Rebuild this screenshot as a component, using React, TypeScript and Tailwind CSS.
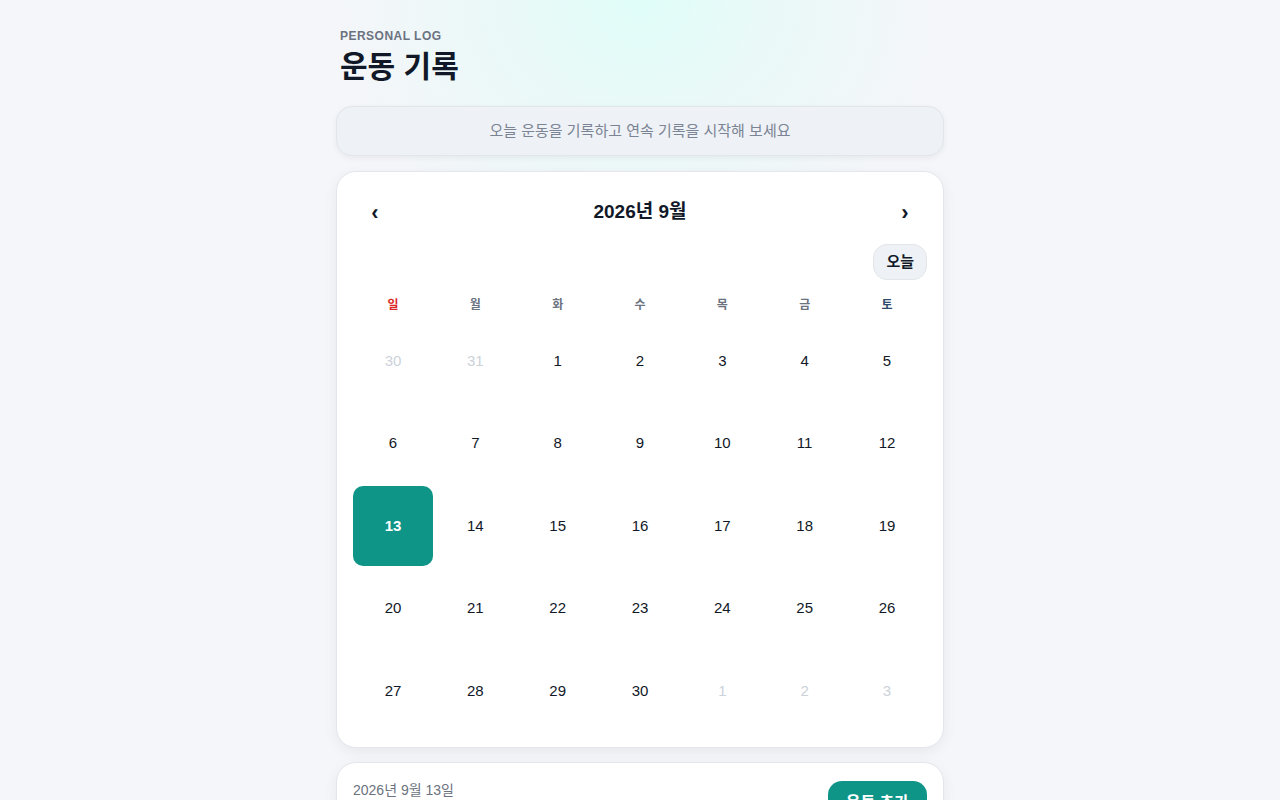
const WEEKDAYS = ["일", "월", "화", "수", "목", "금", "토"];

type Day = { n: number; inMonth: boolean };

function buildDays(): Day[] {
  const days: Day[] = [{ n: 30, inMonth: false }, { n: 31, inMonth: false }];
  for (let i = 1; i <= 30; i++) days.push({ n: i, inMonth: true });
  for (let i = 1; i <= 3; i++) days.push({ n: i, inMonth: false });
  return days;
}

function weekdayColor(i: number) {
  if (i === 0) return "text-[#dc2626]";
  if (i === 6) return "text-[#2f4a6b]";
  return "text-[#6b7280]";
}

export default function App() {
  const days = buildDays();
  const selected = 13;

  return (
    <div
      className="min-h-screen bg-[#f4f6f9] bg-[radial-gradient(ellipse_300px_260px_at_50%_0%,#e0fdf8_0%,#eaf9f8_45%,transparent_100%)] text-[#111827]"
      style={{ fontFamily: '"Liberation Sans", "Noto Sans CJK KR", Arial, sans-serif' }}
    >
      <div className="mx-auto w-[608px] pt-[27px] pb-10">
        <header className="px-1">
          <p className="text-[12px] font-bold uppercase tracking-[0.04em] text-[#6b7280]">
            Personal Log
          </p>
          <h1 className="mt-[3px] text-[30px] font-bold leading-[38px] text-[#111827]">
            운동 기록
          </h1>
        </header>

        <div className="mt-5 flex h-[50px] items-center justify-center rounded-[16px] border border-[#e2e6eb] bg-[#eef1f5] text-[15px] text-[#7b8494] shadow-[0_2px_6px_rgba(15,23,42,0.06)]">
          오늘 운동을 기록하고 연속 기록을 시작해 보세요
        </div>

        <section className="mt-[15px] rounded-[20px] border border-[#e3e7ec] bg-white p-4 shadow-[0_4px_14px_rgba(15,23,42,0.06)]">
          <div className="flex h-12 items-center justify-between">
            <button className="flex h-11 w-11 items-center justify-center text-[22px] font-bold text-[#111827]">
              ‹
            </button>
            <h2 className="text-[19px] font-bold text-[#111827]">2026년 9월</h2>
            <button className="flex h-11 w-11 items-center justify-center text-[22px] font-bold text-[#111827]">
              ›
            </button>
          </div>

          <div className="mt-2 flex justify-end">
            <button className="h-9 rounded-[14px] border border-[#e2e6eb] bg-[#eef1f5] px-3 text-[15px] font-bold text-[#111827]">
              오늘
            </button>
          </div>

          <div className="mt-[17px] grid grid-cols-7 gap-[2.3px]">
            {WEEKDAYS.map((w, i) => (
              <div
                key={w}
                className={`flex h-4 items-center justify-center text-[12px] font-bold ${weekdayColor(i)}`}
              >
                {w}
              </div>
            ))}
          </div>

          <div className="mt-2 grid grid-cols-7 gap-x-[2.3px] gap-y-[2.5px]">
            {days.map((d, i) => {
              const isSel = d.inMonth && d.n === selected;
              return (
                <div
                  key={i}
                  className={
                    isSel
                      ? "flex aspect-square items-center justify-center rounded-[10px] bg-[#0f9488] text-[15px] font-bold text-white"
                      : d.inMonth
                        ? "flex aspect-square items-center justify-center rounded-[10px] text-[15px] text-[#111827]"
                        : "flex aspect-square items-center justify-center rounded-[10px] text-[15px] text-[#cbd2da]"
                  }
                >
                  {d.n}
                </div>
              );
            })}
          </div>
        </section>

        <section className="mt-[14px] flex items-start justify-between rounded-[20px] border border-[#e3e7ec] bg-white p-4 shadow-[0_4px_14px_rgba(15,23,42,0.06)]">
          <div className="pt-[1px]">
            <p className="text-[14px] text-[#6b7280]">2026년 9월 13일</p>
            <p className="mt-2 text-[18px] font-bold text-[#111827]">기록 없음</p>
          </div>
          <button className="mt-[2px] h-11 rounded-[14px] bg-[#0f9488] px-[18px] text-[16px] font-bold text-white">
            운동 추가
          </button>
        </section>
      </div>
    </div>
  );
}
